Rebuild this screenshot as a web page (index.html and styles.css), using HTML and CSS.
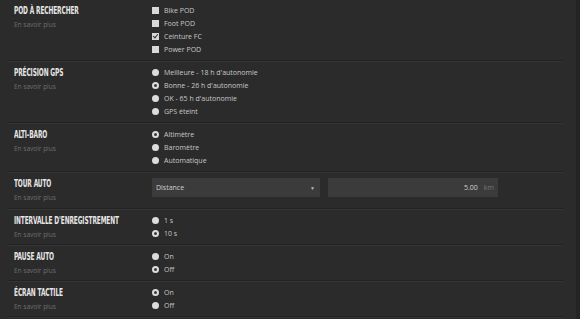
FILE: index.html
```html
<!DOCTYPE html>
<html lang="fr">
<head>
    <meta charset="UTF-8">
    <meta name="viewport" content="width=device-width, initial-scale=1.0">
    <title>Paramètres</title>
    <link rel="stylesheet" href="styles.css">
</head>
<body>
    <div class="settings">
        <div class="row">
            <div class="label">
                <h3>POD à rechercher</h3>
                <a href="#">En savoir plus</a>
            </div>
            <div class="options">
                <label class="opt"><span class="box"></span>Bike POD</label>
                <label class="opt"><span class="box"></span>Foot POD</label>
                <label class="opt"><span class="box checked"></span>Ceinture FC</label>
                <label class="opt"><span class="box"></span>Power POD</label>
            </div>
        </div>

        <div class="row">
            <div class="label">
                <h3>Précision GPS</h3>
                <a href="#">En savoir plus</a>
            </div>
            <div class="options">
                <label class="opt"><span class="radio"></span>Meilleure - 18 h d'autonomie</label>
                <label class="opt"><span class="radio on"></span>Bonne - 26 h d'autonomie</label>
                <label class="opt"><span class="radio"></span>OK - 65 h d'autonomie</label>
                <label class="opt"><span class="radio"></span>GPS éteint</label>
            </div>
        </div>

        <div class="row">
            <div class="label">
                <h3>Alti-baro</h3>
                <a href="#">En savoir plus</a>
            </div>
            <div class="options">
                <label class="opt"><span class="radio on"></span>Altimètre</label>
                <label class="opt"><span class="radio"></span>Baromètre</label>
                <label class="opt"><span class="radio"></span>Automatique</label>
            </div>
        </div>

        <div class="row row-fields">
            <div class="label">
                <h3>Tour auto</h3>
                <a href="#">En savoir plus</a>
            </div>
            <div class="fields">
                <div class="select">
                    <span>Distance</span>
                    <span class="arrow">▼</span>
                </div>
                <div class="input">
                    <span class="value">5.00</span>
                    <span class="unit">km</span>
                </div>
            </div>
        </div>

        <div class="row">
            <div class="label">
                <h3>Intervalle d'enregistrement</h3>
                <a href="#">En savoir plus</a>
            </div>
            <div class="options">
                <label class="opt"><span class="radio"></span>1 s</label>
                <label class="opt"><span class="radio on"></span>10 s</label>
            </div>
        </div>

        <div class="row">
            <div class="label">
                <h3>Pause auto</h3>
                <a href="#">En savoir plus</a>
            </div>
            <div class="options">
                <label class="opt"><span class="radio"></span>On</label>
                <label class="opt"><span class="radio on"></span>Off</label>
            </div>
        </div>

        <div class="row">
            <div class="label">
                <h3>Écran tactile</h3>
                <a href="#">En savoir plus</a>
            </div>
            <div class="options">
                <label class="opt"><span class="radio on"></span>On</label>
                <label class="opt"><span class="radio"></span>Off</label>
            </div>
        </div>
    </div>
</body>
</html>
```

FILE: styles.css
```css
body {
    margin: 0;
    padding: 0;
    background: #2b2b2b;
    color: #cfcfcf;
    font-family: "Open Sans", sans-serif;
    overflow: hidden;
}
.settings {
    padding: 0 12px 0 8px;
    border-right: 4px solid #242424;
    min-height: 319px;
}
.row {
    display: flex;
    padding: 4px 0 4px 6px;
    border-bottom: 1px solid #222;
    box-shadow: 0 1px 0 #343434;
    margin-bottom: 1px;
}
.label {
    width: 138px;
    flex-shrink: 0;
}
.label h3 {
    margin: 0;
    font-family: "Liberation Sans Narrow", "DejaVu Sans Condensed", sans-serif;
    font-weight: bold;
    font-size: 10.5px;
    line-height: 13px;
    color: #e6e6e6;
    text-transform: uppercase;
    letter-spacing: -0.2px;
    transform: scaleX(0.62);
    transform-origin: left center;
    white-space: nowrap;
}
.label a {
    display: block;
    margin-top: 3px;
    font-size: 6.5px;
    line-height: 9px;
    color: #6e6e6e;
    text-decoration: none;
}
.options {
    display: flex;
    flex-direction: column;
}
.opt {
    display: flex;
    align-items: center;
    height: 13px;
    font-size: 7px;
    color: #c8c8c8;
}
.box {
    width: 7px;
    height: 7px;
    background: #d8d8d8;
    margin-right: 5px;
    position: relative;
}
.box.checked::after {
    content: "";
    position: absolute;
    left: 2px;
    top: 0px;
    width: 2px;
    height: 4px;
    border: solid #333;
    border-width: 0 1px 1px 0;
    transform: rotate(40deg);
}
.radio {
    width: 7px;
    height: 7px;
    border-radius: 50%;
    background: #dcdcdc;
    margin-right: 5px;
    box-sizing: border-box;
}
.radio.on {
    border: 2px solid #dcdcdc;
    background: #3a3a3a;
}
.row-fields {
    padding-top: 4px;
    padding-bottom: 6px;
}
.fields {
    display: flex;
    gap: 8px;
    padding-top: 1px;
}
.select, .input {
    width: 168px;
    height: 19px;
    background: #3b3b3b;
    display: flex;
    align-items: center;
    font-size: 7px;
    box-sizing: border-box;
}
.select {
    justify-content: space-between;
    padding: 0 5px 0 4px;
    color: #cfcfcf;
}
.arrow {
    font-size: 5px;
    color: #bbb;
}
.input {
    width: 170px;
    justify-content: flex-end;
    padding-right: 4px;
}
.input .value {
    color: #cfcfcf;
}
.input .unit {
    color: #777;
    margin-left: 6px;
}
```
